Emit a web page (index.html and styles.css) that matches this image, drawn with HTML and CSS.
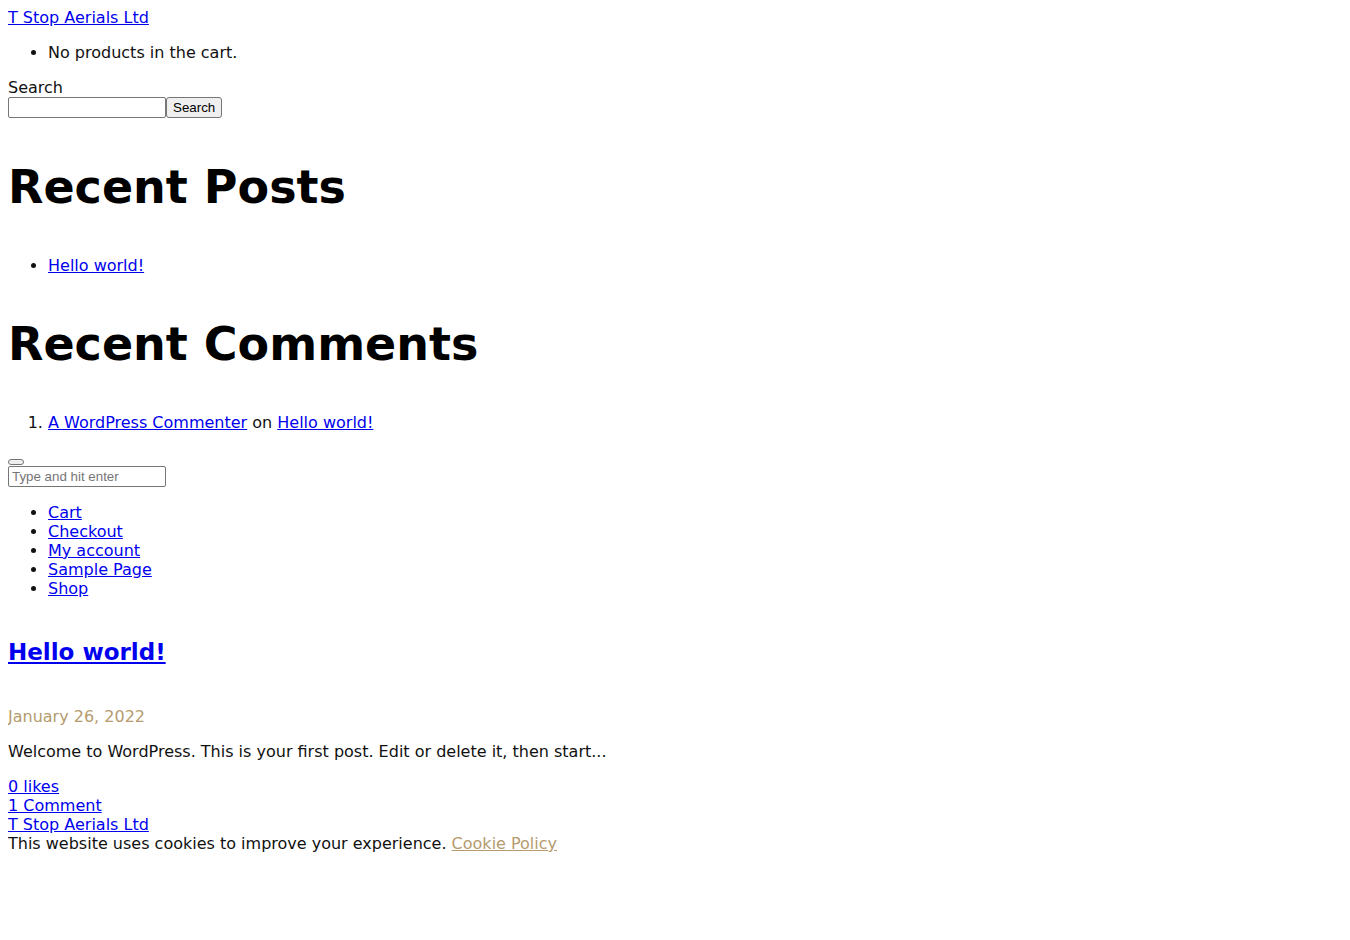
FILE: index.html
```html
<!doctype html>
<html>
<head>
<meta charset="utf-8">
<title>T Stop Aerials Ltd</title>
<link rel="stylesheet" href="styles.css">
</head>
<body>
<div class="site-head">
	<a href="#" class="brand">T Stop Aerials Ltd</a>
	<ul class="mini-cart">
		<li>No products in the cart.</li>
	</ul>
	<form class="search-form">
		<label class="search-label" for="s1">Search</label>
		<div class="search-row">
			<input type="text" id="s1" class="search-field" />
			<button type="button" class="search-btn">Search</button>
		</div>
	</form>
</div>

<div class="widget">
	<h2 class="widget-title">Recent Posts</h2>
	<ul class="widget-list">
		<li><a href="#">Hello world!</a></li>
	</ul>
</div>

<div class="widget">
	<h2 class="widget-title">Recent Comments</h2>
	<ol class="widget-list">
		<li><a href="#">A WordPress Commenter</a> on <a href="#">Hello world!</a></li>
	</ol>
</div>

<div class="overlay-search">
	<button type="button" class="close-btn"></button>
	<input type="text" class="overlay-field" placeholder="Type and hit enter" />
</div>

<ul class="menu">
	<li><a href="#">Cart</a></li>
	<li><a href="#">Checkout</a></li>
	<li><a href="#">My account</a></li>
	<li><a href="#">Sample Page</a></li>
	<li><a href="#">Shop</a></li>
</ul>

<div class="post">
	<h2 class="post-title"><a href="#">Hello world!</a></h2>
	<div class="post-date">January 26, 2022</div>
	<p class="post-excerpt">Welcome to WordPress. This is your first post. Edit or delete it, then start...</p>
	<div class="post-meta">
		<a href="#">0 likes</a><br />
		<a href="#">1 Comment</a><br />
		<a href="#">T Stop Aerials Ltd</a>
	</div>
</div>

<div class="cookie-bar">This website uses cookies to improve your experience. <a href="#" class="cookie-link">Cookie Policy</a></div>
</body>
</html>
```

FILE: styles.css
```css
body{ margin:8px; font-family:"DejaVu Sans", "Open Sans", sans-serif; font-size:16px; line-height:19px; color:#111; background:#fff;}
a{ color:#0000ee;}
ul,ol{ margin:16px 0; padding-left:40px;}

.brand{ display:inline-block;}
.search-form{ margin:0;}
.search-label{ display:block;}
.search-row{ display:flex; height:21px;}
.search-field{ width:158px; height:21px; box-sizing:border-box; border:1px solid #767676; border-radius:2px; padding:1px 2px; margin:0; font-size:13px;}
.search-btn{ height:21px; box-sizing:border-box; margin:0; padding:1px 6px; font:13.333px "Liberation Sans", Arial, sans-serif; color:#000; background:#efefef; border:1px solid #767676; border-radius:3px;}

.widget-title{ font-size:46px; line-height:58px; font-weight:700; margin:40px 0; color:#000;}

.overlay-search{ margin-top:27px;}
.close-btn{ display:block; width:16px; height:6px; padding:0; margin:0; background:#efefef; border:1px solid #767676; border-radius:3px;}
.overlay-field{ display:block; width:158px; height:21px; box-sizing:border-box; margin:1px 0 0; border:1px solid #767676; border-radius:2px; padding:1px 3px; font:13.333px "Liberation Sans", Arial, sans-serif;}
.overlay-field::placeholder{ color:#757575;}

.post-title{ font-size:23px; line-height:29px; font-weight:700; margin:40px 0 0;}
.post-date{ color:#b59b6e; margin-top:40px;}
.post-excerpt{ margin:16px 0;}
.post-meta{ margin:0;}
.cookie-link{ color:#b59b6e;}
```
